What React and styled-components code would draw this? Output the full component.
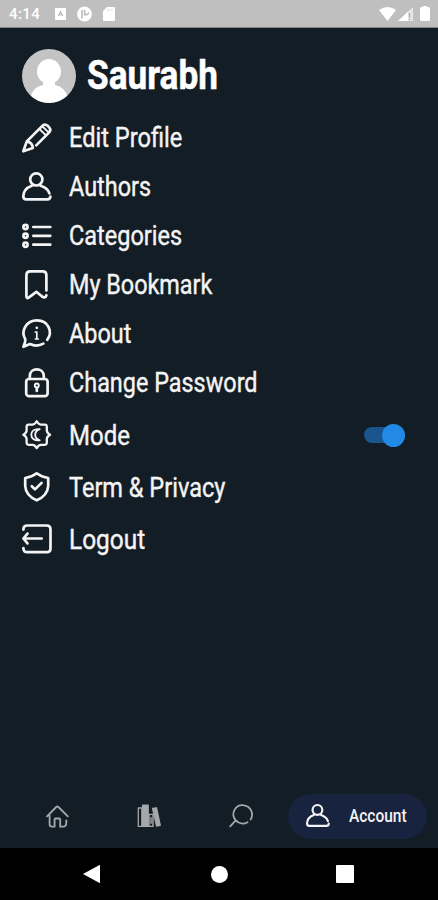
import styled, { createGlobalStyle } from "styled-components";

const GlobalStyle = createGlobalStyle`
  * {
    box-sizing: border-box;
  }

  body {
    margin: 0;
    background: #131d25;
    font-family: "Roboto", "Liberation Sans", sans-serif;
  }
`

const icons = {
  edit: (
    <>
      <path d="M14.2 22.4L27.2 9.4Q29.4 6.8 27.2 4.4L25.6 2.8Q23.2.6 20.6 2.6L4.800 18.4L1.3 28.3L10.800 25Q10.600 19.6 4.8 18.4" />
      <path d="M17.4 6L24 12.4M20.4 3.4L26.600 9.4" strokeWidth="2" />
    </>
  ),
  user: (
    <>
      <circle cx="14.3" cy="7.4" r="6.1" />
      <path d="M9.8 13.8C4.4 15.8 1.4 19.6 1.3 24.3Q1.3 27.4 4.2 27.4H25.3Q28.4 27.4 28.4 24.6M18.8 13.8C23.2 15.2 26.2 17.8 27.4 21.4" />
    </>
  ),
  list: (
    <>
      <circle cx="3.5" cy="6" r="2.1" />
      <circle cx="3.5" cy="14.8" r="2.1" />
      <circle cx="3.5" cy="23.7" r="2.1" />
      <path d="M11.3 6H28.3M11.3 14.8H28.3M11.3 23.7H28.3" />
    </>
  ),
  bookmark: (
    <path d="M24.4 20.5V5.3Q24.4 1.4 20.6 1.4H8.3Q4.4 1.4 4.4 5.3V26.5Q4.6 29.2 7 27.4L14.4 21.8L20 26.5Q23.6 28.8 24.4 25.2" />
  ),
  about: (
    <>
      <path d="M25.2 20.8C31 13.5 26.8 1.5 15 1.4C4.2 1.4-1.7 12.2 3.3 20.3Q3.6 23 1.4 27.8L8.1 25.1Q14.8 28.2 21.4 24.6" />
      <path d="M14.8 13V20M13.3 13H14.8M13.4 20H16.3" strokeWidth="1.7" />
      <circle cx="14.8" cy="8.8" r=".7" strokeWidth="1.3" />
    </>
  ),
  lock: (
    <>
      <rect x="4.2" y="11" width="21.4" height="17.2" rx="2.8" />
      <path d="M7.8 10.8V8.2C7.8-.9 21.8-.9 21.8 8.2V10.8M14.8 19.8V23" />
      <circle cx="14.8" cy="17.5" r="2" strokeWidth="1.9" />
    </>
  ),
  mode: (
    <>
      <path d="M14.7 1.3Q16.4 4.4 18.8 4.6H22.8Q24.7 4.7 24.8 6.6V10.6Q25 13 28.1 14.7Q25 16.4 24.8 18.8V22.8Q24.7 24.7 22.8 24.8H18.8Q16.4 25 14.7 28.1Q13 25 10.6 24.8H6.6Q4.7 24.7 4.6 22.8V18.8Q4.4 16.4 1.3 14.7Q4.4 13 4.6 10.6V6.6Q4.7 4.7 6.6 4.6H10.6Q13 4.4 14.7 1.3Z" strokeWidth="2.3" />
      <path d="M17.7 9.2C6.5 7.4 6.5 21.9 17.7 20.3C11.7 18.1 11.7 11.4 17.7 9.2Z" strokeWidth="1.8" />
    </>
  ),
  shield: (
    <>
      <path d="M14.7 1.3Q19.5 5 26.2 6V14Q25.6 23.6 14.7 28.3Q3.8 23.6 3.2 14V6Q9.9 5 14.7 1.3Z" />
      <path d="M9.8 14.2L13 17.4L19.6 10.9" />
    </>
  ),
  logout: (
    <path d="M1.4 5.6Q1.4 1.5 5.4 1.5H24.6Q28.5 1.5 28.5 5.4V24.2Q28.5 28.2 24.6 28.2H5.4Q1.4 28.2 1.4 24M19.7 14.5H2M5.5 9.6L1.4 14.5L5.5 19.4" />
  ),
  home: (
    <path d="M1.3 14.8L13.4 2.6Q14.8 1.2 16.2 2.6L28.5 14.8M4.7 13.6V25.2Q4.7 28.3 7.7 28.3H11.2V18.8Q11.2 17.6 12.4 17.6H17.2Q18.5 17.6 18.5 18.8V28.3H22.2Q26.5 28.3 26.5 22.4V20" />
  ),
  books: (
    <>
      <path d="M1.6 5H6V28H1.6Z" strokeWidth="1.6" />
      <path d="M7 1.5H14V28H7Z" fill="currentColor" strokeWidth="1.6" />
      <path d="M15 13H20V28H15ZM17.5 17V24" strokeWidth="1.8" />
      <path d="M19.6 5.6L24.4 4.8L29 26.6L24.6 27.5Z" fill="currentColor" strokeWidth="1.8" />
    </>
  ),
  search: (
    <path d="M27 19.5C31.5 12.2 27.3 2.7 18.7 1.6C7.8.2 1.6 12.3 8.2 20.2C12.3 25 18.5 25.5 23.2 22.7M8.4 20.4L1.5 28" />
  ),
}

const Icon = ({ name, size = 30, weight = 2.7 }) => (
  <IconSvg viewBox="0 0 30 30" $size={size} strokeWidth={weight}>
    {icons[name]}
  </IconSvg>
)

const menus = [
  { name: "Edit Profile", icon: "edit" },
  { name: "Authors", icon: "user", stretch: 0.868 },
  { name: "Categories", icon: "list", stretch: 0.87 },
  { name: "My Bookmark", icon: "bookmark", stretch: 0.866 },
  { name: "About", icon: "about", stretch: 0.868 },
  { name: "Change Password", icon: "lock", stretch: 0.867 },
  { name: "Mode", icon: "mode", tall: true, toggle: true, stretch: 0.89 },
  { name: "Term & Privacy", icon: "shield", tall: true, stretch: 0.872 },
  { name: "Logout", icon: "logout", tall: true, stretch: 0.905 },
]

const StatusBar = () => (
  <StatusBox>
    <Clock>4:14</Clock>
    <StatusIcons>
      <svg width="11" height="12" viewBox="0 0 11 12">
        <path fill="#fff" d="M1 0H10Q11 0 11 1V11Q11 12 10 12H1Q0 12 0 11V1Q0 0 1 0Z" />
        <path d="M3.3 8L5.5 3.5L7.7 8M3.5 6.7H7.5" fill="none" stroke="#b5b5b5" strokeWidth="1.1" />
      </svg>
      <svg width="15" height="16" viewBox="0 0 15 16">
        <circle cx="7.5" cy="8" r="7.4" fill="#fff" />
        <path d="M5 4V12.5M7.6 3.8V8.6H10Q11.5 8.2 11.6 6.5" fill="none" stroke="#bfbfbf" strokeWidth="1.7" />
      </svg>
      <svg width="12" height="14" viewBox="0 0 12 14">
        <path d="M4 0H11Q12 0 12 1V13Q12 14 11 14H1Q0 14 0 13V4Z" fill="#fff" />
        <path d="M4.5 1.8V4M6.8 1.8V4M9 1.8V4" stroke="#d4d4d4" strokeWidth=".8" />
      </svg>
    </StatusIcons>
    <SignalIcons>
      <svg width="17" height="14" viewBox="0 0 17 14">
        <path d="M0 3Q8.5-3 17 3L8.5 14Z" fill="#fff" />
      </svg>
      <svg width="15" height="14" viewBox="0 0 15 14">
        <path d="M0 14L15 0V14Z" fill="#fff" opacity=".6" />
        <path d="M0 14L10 4.7V14Z" fill="#fff" />
        <path d="M11.5 6V10.5M11.5 12V13" stroke="#aaa" strokeWidth="1.3" />
      </svg>
      <svg width="10" height="15" viewBox="0 0 10 15">
        <path d="M3 0H7V1H8.5Q10 1.2 10 3V13.5Q10 15 8.5 15H1.5Q0 15 0 13.5V3Q0 1.2 1.5 1H3Z" fill="#fff" />
      </svg>
    </SignalIcons>
  </StatusBox>
)

const MenuItem = ({ menu }) => (
  <MenuRow $tall={menu.tall}>
    <Icon name={menu.icon} />
    <MenuName $stretch={menu.stretch}>{menu.name}</MenuName>
    {menu.toggle && (
      <Switch>
        <SwitchThumb />
      </Switch>
    )}
  </MenuRow>
)

const App = () => {
  return (
    <Screen>
      <GlobalStyle />
      <StatusBar />
      <Profile>
        <Avatar viewBox="0 0 54 54">
          <clipPath id="avatarClip">
            <circle cx="27" cy="27" r="27" />
          </clipPath>
          <g clipPath="url(#avatarClip)">
            <rect width="54" height="54" fill="#c4c4c4" />
            <ellipse cx="27" cy="22.5" rx="12" ry="12.5" fill="#fff" />
            <path d="M21 31V36Q11 38 8.5 48Q16 54 27 54T45.5 48Q43 38 33 36V31Z" fill="#fff" />
          </g>
        </Avatar>
        <UserName>Saurabh</UserName>
      </Profile>
      <MenuList>
        {menus.map((menu) => (
          <MenuItem key={menu.name} menu={menu} />
        ))}
      </MenuList>
      <TabBar>
        <Tab><Icon name="home" size={23} weight={2.4} /></Tab>
        <Tab><Icon name="books" size={24} /></Tab>
        <Tab><Icon name="search" size={24} weight={2.2} /></Tab>
        <ActiveTab>
          <Icon name="user" size={24} />
          <TabName>Account</TabName>
        </ActiveTab>
      </TabBar>
      <SystemBar>
        <svg width="18" height="20" viewBox="0 0 18 20"><path d="M0 10L17 .8V19.2Z" fill="#fff" /></svg>
        <HomeButton />
        <RecentButton />
      </SystemBar>
    </Screen>
  )
}

export default App;

const Screen = styled.div`
  display: flex;
  flex-direction: column;
  width: 438px;
  height: 900px;
  overflow: hidden;
  background: #131d25;
  color: #f4f4f4;
`

const StatusBox = styled.div`
  display: flex;
  align-items: center;
  height: 28px;
  padding: 0 8px 0 9px;
  background: #bfbfbf;
  border-bottom: 1px solid #7f8386;
`

const Clock = styled.span`
  width: 46px;
  padding-top: 1px;
  font-size: 15px;
  font-weight: 500;
  letter-spacing: 0.4px;
  color: #fff;
`

const StatusIcons = styled.div`
  display: flex;
  align-items: center;
  gap: 11px;
`

const SignalIcons = styled.div`
  display: flex;
  align-items: center;
  gap: 2px;
  margin-left: auto;

  & svg:last-child {
    margin-left: 5px;
  }
`

const Profile = styled.div`
  display: flex;
  align-items: center;
  height: 85px;
  padding: 11px 22px 0;
`

const Avatar = styled.svg`
  width: 54px;
  height: 54px;
  margin-bottom: 1px;
`

const UserName = styled.h1`
  margin: 0 0 0 11px;
  font-size: 40px;
  line-height: 48px;
  font-weight: 700;
  color: #fff;
  -webkit-text-stroke: 0.5px #fff;
  transform: scaleX(0.88);
  transform-origin: left;
`

const MenuList = styled.div`
  flex: 1;
`

const MenuRow = styled.div`
  display: flex;
  align-items: center;
  height: ${({ $tall }) => ($tall ? "52px" : "49px")};
  padding: 0 33px 0 22px;

  /* the last group sits a little lower */
  &:nth-child(7) {
    margin-top: 2px;
  }
`

const IconSvg = styled.svg`
  flex: none;
  width: ${({ $size }) => $size}px;
  height: ${({ $size }) => $size}px;
  overflow: visible;
  fill: none;
  stroke: currentColor;
  stroke-linecap: round;
  stroke-linejoin: round;
`

const MenuName = styled.span`
  margin-left: 16.5px;
  padding-top: 1px;
  font-size: 27px;
  line-height: 32px;
  white-space: nowrap;
  -webkit-text-stroke: 0.4px currentColor;
  transform: scaleX(${({ $stretch }) => $stretch || 0.875});
  transform-origin: left;
`

const Switch = styled.div`
  display: flex;
  align-items: center;
  justify-content: flex-end;
  width: 41px;
  height: 16px;
  margin-left: auto;
  border-radius: 8px;
  background: #1a558d;
`

const SwitchThumb = styled.div`
  flex: none;
  width: 23px;
  height: 23px;
  border-radius: 50%;
  background: #2389e6;
`

const TabBar = styled.div`
  display: flex;
  align-items: center;
  height: 64px;
  padding: 0 11px 0 11px;
`

const Tab = styled.div`
  display: flex;
  justify-content: center;
  width: 92px;
  color: #a5a8ab;
`

const ActiveTab = styled.div`
  display: flex;
  align-items: center;
  width: 139px;
  height: 45px;
  margin-left: 1px;
  padding-left: 18px;
  border-radius: 23px;
  background: #18233f;
`

const TabName = styled.span`
  margin-left: 19px;
  font-size: 18px;
  font-weight: 500;
  line-height: 24px;
  transform: scaleX(0.86);
  transform-origin: left;
`

const SystemBar = styled.div`
  display: grid;
  grid-template-columns: repeat(3, 126.5px);
  align-items: center;
  justify-items: center;
  height: 52px;
  padding-left: 29px;
  background: #000;
`

const HomeButton = styled.div`
  width: 17px;
  height: 17px;
  margin-left: 1px;
  border-radius: 50%;
  background: #fff;
`

const RecentButton = styled.div`
  width: 18px;
  height: 18px;
  border-radius: 1px;
  background: #fff;
`
